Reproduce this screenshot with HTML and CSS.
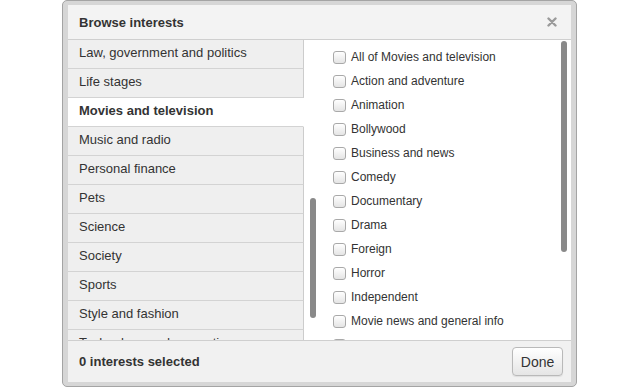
FILE: index.html
```html
<!DOCTYPE html>
<html>
<head>
<meta charset="utf-8">
<link rel="stylesheet" href="styles.css">
</head>
<body>
<div class="frame">
  <div class="dialog">
    <div class="header">
      <span class="title">Browse interests</span>
      <svg class="close" width="10" height="10" viewBox="0 0 10 10"><path d="M1.5 1.5 L8.5 8.5 M8.5 1.5 L1.5 8.5" stroke="#9a9a9a" stroke-width="2.4" stroke-linecap="round"/></svg>
    </div>
    <div class="body">
      <ul class="cats">
        <li>Law, government and politics</li>
        <li>Life stages</li>
        <li class="active">Movies and television</li>
        <li>Music and radio</li>
        <li>Personal finance</li>
        <li>Pets</li>
        <li>Science</li>
        <li>Society</li>
        <li>Sports</li>
        <li>Style and fashion</li>
        <li>Technology and computing</li>
      </ul>
      <ul class="opts">
        <li><span class="cb"></span>All of Movies and television</li>
        <li><span class="cb"></span>Action and adventure</li>
        <li><span class="cb"></span>Animation</li>
        <li><span class="cb"></span>Bollywood</li>
        <li><span class="cb"></span>Business and news</li>
        <li><span class="cb"></span>Comedy</li>
        <li><span class="cb"></span>Documentary</li>
        <li><span class="cb"></span>Drama</li>
        <li><span class="cb"></span>Foreign</li>
        <li><span class="cb"></span>Horror</li>
        <li><span class="cb"></span>Independent</li>
        <li><span class="cb"></span>Movie news and general info</li>
        <li><span class="cb"></span>Romance</li>
      </ul>
      <div class="thumb thumb-left"></div>
      <div class="thumb thumb-right"></div>
    </div>
    <div class="footer">
      <span class="count">0 interests selected</span>
      <button class="done">Done</button>
    </div>
  </div>
</div>
</body>
</html>
```
FILE: styles.css
```css
html, body {
  margin: 0;
  padding: 0;
  background: #ffffff;
  height: 387px;
  overflow: hidden;
}
body {
  font-family: "Liberation Sans", Arial, sans-serif;
  font-size: 13px;
  color: #333333;
}
.frame {
  margin-left: 62px;
  width: 503px;
  padding: 4px 5px;
  border: 1px solid #a4a4a4;
  border-radius: 5px;
  background: #d6d6d6;
}
.dialog {
  background: #ffffff;
  display: flex;
  flex-direction: column;
  height: 377px;
}
.header {
  height: 34px;
  background: #f3f3f3;
  border-bottom: 1px solid #cfcfcf;
  display: flex;
  align-items: center;
  justify-content: space-between;
  padding: 0 14px 0 11px;
}
.title {
  font-weight: bold;
  font-size: 13px;
  color: #333;
}
.close {
  display: block;
}
.body {
  position: relative;
  display: flex;
  height: 300px;
  overflow: hidden;
}
ul {
  list-style: none;
  margin: 0;
  padding: 0;
}
.cats {
  width: 236px;
  flex: none;
}
.cats li {
  height: 28px;
  line-height: 25px;
  padding-left: 11px;
  background: #efefef;
  border-bottom: 1px solid #d3d3d3;
  border-right: 1px solid #cccccc;
  white-space: nowrap;
}
.cats li.active {
  background: #ffffff;
  font-weight: bold;
  border-right-color: #ffffff;
}
.opts {
  flex: 1;
  padding: 5px 0 0 29px;
  font-size: 12px;
}
.opts li {
  height: 24px;
  display: flex;
  align-items: center;
  gap: 5px;
  white-space: nowrap;
}
.cb {
  width: 11px;
  height: 11px;
  border: 1px solid #a9a9a9;
  border-radius: 3px;
  background: linear-gradient(#ffffff, #e4e4e4);
  flex: none;
}
.thumb {
  position: absolute;
  width: 6px;
  border-radius: 3px;
  background: #898989;
}
.thumb-left {
  left: 242px;
  top: 158px;
  height: 120px;
}
.thumb-right {
  left: 493px;
  top: 1px;
  height: 211px;
}
.footer {
  height: 41px;
  border-top: 1px solid #cfcfcf;
  background: #f1f1f1;
  display: flex;
  align-items: center;
  justify-content: space-between;
  padding: 0 8px 0 11px;
}
.count {
  font-weight: bold;
}
.done {
  width: 51px;
  height: 29px;
  border: 1px solid #b9b9b9;
  border-radius: 4px;
  background: linear-gradient(#ffffff, #e5e5e5);
  font-family: "Liberation Sans", Arial, sans-serif;
  font-size: 14px;
  color: #333;
  padding: 0;
  box-shadow: 0 1px 1px rgba(0,0,0,0.08);
}
```
